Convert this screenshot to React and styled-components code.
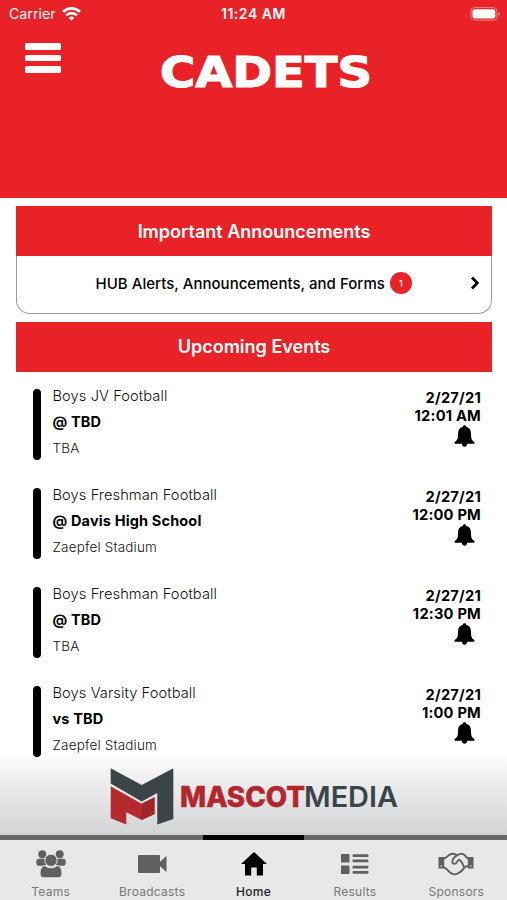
import React from 'react';
import styled, { createGlobalStyle } from 'styled-components';

const GlobalStyle = createGlobalStyle`
  * {
    box-sizing: border-box;
  }

  body {
    margin: 0;
    background: #fff;
    font-family: Inter, 'Liberation Sans', sans-serif;
  }

  svg {
    display: block;
  }
`;

const Screen = styled.div`
  display: flex;
  flex-direction: column;
  width: 507px;
  height: 900px;
  overflow: hidden;
`;

const Header = styled.header`
  flex: none;
  height: 198px;
  background: #e92227;
  color: #fff;
`;

const StatusBar = styled.div`
  display: grid;
  grid-template-columns: 1fr auto 1fr;
  align-items: center;
  height: 28px;
  padding: 0 6px;
  font-size: 14.2px;
  line-height: 18px;
`;

const Carrier = styled.div`
  display: flex;
  align-items: center;
  gap: 6px;
  padding-left: 3px;
`;

const Clock = styled.div`
  font-weight: 600;
  font-size: 14px;
  letter-spacing: 0.55px;
`;

const Battery = styled.div`
  display: flex;
  justify-content: flex-end;
`;

const TitleRow = styled.div`
  display: flex;
  align-items: flex-start;
  padding: 15px 0 0 25px;
`;

const MenuButton = styled.button`
  display: flex;
  flex-direction: column;
  gap: 5px;
  width: 36px;
  padding: 0;
  border: none;
  background: none;
  cursor: pointer;
`;

const MenuLine = styled.span`
  height: 6.6px;
  border-radius: 1.5px;
  background: #fff;
`;

const TeamLogo = styled.svg`
  margin-left: 97px;
`;

const Content = styled.main`
  flex: 1;
  min-height: 0;
  overflow: hidden;
  padding: 8px 15px 0 16px;
`;

const SectionTitle = styled.h2`
  display: flex;
  align-items: center;
  justify-content: center;
  height: 50px;
  margin: 0;
  background: #e92227;
  color: #fff;
  font-size: 18px;
  font-weight: 600;
`;

const Announcement = styled.div`
  display: flex;
  align-items: center;
  height: 57.5px;
  margin-bottom: 8px;
  padding: 0 12px 2px 78.5px;
  border: 1px solid #999;
  border-top: none;
  border-radius: 0 0 14px 14px;
  font-size: 15px;
  font-weight: 500;
  letter-spacing: 0.03px;
`;

const Count = styled.span`
  display: flex;
  align-items: center;
  justify-content: center;
  width: 22px;
  height: 22px;
  margin-left: 5px;
  border-radius: 50%;
  background: #e92227;
  color: #fff;
  font-size: 9px;
`;

const Chevron = styled.svg`
  margin-left: auto;
`;

const EventList = styled.div`
  display: flex;
  flex-direction: column;
  gap: 28px;
  padding: 17px 11px 0 17px;
`;

const EventRow = styled.div`
  display: flex;
  height: 71px;
`;

const EventMark = styled.div`
  width: 7.5px;
  margin-right: 12px;
  border-radius: 4px;
  background: #000;
`;

const EventInfo = styled.div`
  flex: 1;
  margin-top: -6px;
  line-height: 26px;
  white-space: nowrap;
`;

const Sport = styled.div`
  color: #111;
  font-size: 14.7px;
  font-weight: 300;
  letter-spacing: 0.06px;
`;

const Opponent = styled.div`
  font-size: 14.5px;
  font-weight: 700;
  letter-spacing: 0.15px;
`;

const Venue = styled.div`
  color: #111;
  font-size: 13.5px;
  font-weight: 300;
  letter-spacing: 0.17px;
`;

const EventTime = styled.div`
  display: flex;
  flex-direction: column;
  align-items: flex-end;
  font-size: 14.7px;
  font-weight: 700;
  line-height: 18px;
  letter-spacing: 0.2px;
`;

const Bell = styled.svg`
  margin-right: 6px;
`;

const SponsorBanner = styled.div`
  flex: none;
  height: 78px;
  padding: 9px 0 0 109px;
  background: linear-gradient(#fcfcfc, #eeeeef 30%, #d1d3d5);
`;

const TabBar = styled.nav`
  display: flex;
  flex: none;
  height: 65px;
  background: #e8e8e8;
`;

const Tab = styled.button`
  display: flex;
  flex: 1;
  flex-direction: column;
  align-items: center;
  padding: 8px 0 0;
  border: none;
  border-top: 5px solid ${(props) => (props.$active ? '#000' : '#686868')};
  border-radius: 0;
  background: none;
  color: ${(props) => (props.$active ? '#000' : '#606060')};
  font-family: inherit;
  font-size: 12px;
  font-weight: ${(props) => (props.$active ? 500 : 400)};
  line-height: 16px;
  letter-spacing: 0.25px;
  cursor: pointer;
`;

const TabIcon = styled.div`
  display: flex;
  align-items: center;
  justify-content: center;
  height: 31px;
  margin-bottom: 5px;
`;

const TabLabel = styled.span`
  color: ${(props) => (props.$active ? '#222' : '#777')};
`;

const events = [
  { sport: 'Boys JV Football', opponent: '@ TBD', venue: 'TBA', date: '2/27/21', time: '12:01 AM' },
  {
    sport: 'Boys Freshman Football',
    opponent: '@ Davis High School',
    venue: 'Zaepfel Stadium',
    date: '2/27/21',
    time: '12:00 PM',
  },
  { sport: 'Boys Freshman Football', opponent: '@ TBD', venue: 'TBA', date: '2/27/21', time: '12:30 PM' },
  { sport: 'Boys Varsity Football', opponent: 'vs TBD', venue: 'Zaepfel Stadium', date: '2/27/21', time: '1:00 PM' },
];

function WifiIcon() {
  return (
    <svg width="19" height="14" viewBox="0 0 19 14" fill="none" stroke="currentColor" strokeWidth="2.7">
      <path d="M1 4.8C5.9.1 13.1.1 18 4.8" />
      <path d="M4.1 8.2c3.1-2.9 7.7-2.9 10.8 0" />
      <path d="M6.6 10.7c1.7-1.6 4.1-1.6 5.8 0L9.5 13.7z" fill="currentColor" stroke="none" />
    </svg>
  );
}

function BatteryIcon() {
  return (
    <svg width="31" height="14" viewBox="0 0 31 14">
      <rect x=".9" y=".6" width="26" height="12.6" rx="3.6" fill="none" stroke="#fff" strokeOpacity=".45" />
      <rect x="2.5" y="2.2" width="22.8" height="9.4" rx="2" fill="#fff" />
      <path d="M28.6 5v4c1.8-.6 1.8-3.4 0-4z" fill="#fff" fillOpacity=".55" />
    </svg>
  );
}

function BellIcon() {
  return (
    <Bell width="21" height="22" viewBox="0 0 21 22">
      <path d="M10.5.3c-1 0-1.600.600-1.700 1.500C5.500 2.600 4.200 5 4.100 8l-.3 4.500c-.2 2-1.200 3-3 4.600-.8.800-.5 1.600.5 1.600h18.400c1 0 1.300-.8.500-1.600-1.800-1.600-2.800-2.600-3-4.600L16.900 8c-.1-3-1.400-5.400-4.700-6.200-.1-.9-.7-1.500-1.700-1.500zM7.700 18.500c.3 2.100 1.500 3.200 2.800 3.200s2.500-1.100 2.800-3.200z" />
    </Bell>
  );
}

function TeamsIcon() {
  return (
    <svg width="30" height="28" viewBox="0 0 30 28" fill="currentColor">
      <circle cx="6.300" cy="4.300" r="4" />
      <circle cx="23.700" cy="4.300" r="4" />
      <rect x=".3" y="8.700" width="10" height="7" rx="2.800" />
      <rect x="19.700" y="8.700" width="10" height="7" rx="2.800" />
      <path
        d="M9 15.500c3 3 9 3 12 0 3.600.5 5 4 5 8 0 2.800-1.500 4.300-4 4.300H8c-2.500 0-4-1.500-4-4.300 0-4 1.400-7.500 5-8z"
        stroke="#e8e8e8"
      />
      <circle cx="15" cy="10.300" r="6.200" stroke="#e8e8e8" />
    </svg>
  );
}

function BroadcastIcon() {
  return (
    <svg width="29" height="20" viewBox="0 0 29 20" fill="currentColor">
      <rect y="1" width="22" height="18" rx="1" />
      <path d="M21.500 8.200 28.500 2v16l-7-6.200z" />
    </svg>
  );
}

function HomeIcon() {
  return (
    <svg width="26" height="24" viewBox="0 0 26 24" fill="currentColor">
      <path d="M13 0 26 12h-4v11.600h-6.200v-8h-5.600v8H4V12H0z" />
    </svg>
  );
}

function ResultsIcon() {
  return (
    <svg width="28" height="20" viewBox="0 0 28 20" fill="currentColor">
      <rect width="8.500" height="8.500" rx=".5" />
      <rect y="11.500" width="8.500" height="8.500" rx=".5" />
      <rect x="11.500" y=".2" width="16" height="2.800" rx="1" />
      <rect x="11.500" y="5.500" width="16" height="2.800" rx="1" />
      <rect x="11.500" y="11.700" width="16" height="2.800" rx="1" />
      <rect x="11.500" y="17" width="16" height="2.800" rx="1" />
    </svg>
  );
}

function SponsorsIcon() {
  return (
    <svg width="36" height="24" viewBox="0 0 36 24" fill="none" stroke="currentColor" strokeWidth="1.900" strokeLinejoin="round" strokeLinecap="round">
      <path d="M.5 5h5.700v11.500H.5zM29.800 5h5.700v11.500h-5.700z" fill="currentColor" stroke="none" />
      <path d="M6 6.500c2.500-.3 4-3.500 7-4.500 2.300-.7 4.500.2 6.300 1.200C22 1.500 25 1.300 27 3.500c1 1.200 1.800 2.400 3 2.800" />
      <path d="M6 15.500c2.500.5 3.500 3 6 5 2.700 2 5.500 2.500 8 .8 3-1.800 5-3 6-5.300.7-1.500 2-1.800 4-2" />
      <path d="M19.300 3.200c-3 1.600-4.800 4-5 7 .3 2.300 3.400 2.200 4.500 0 .6-1.400 1.200-2.300 2.700-2.500 2 1.500 3.500 3.500 4.500 7.300" />
      <circle cx="3.200" cy="14" r=".8" fill="#e8e8e8" stroke="none" />
      <circle cx="32.800" cy="14" r=".8" fill="#e8e8e8" stroke="none" />
    </svg>
  );
}

function MascotLogo() {
  return (
    <svg width="292" height="60" viewBox="0 0 292 60">
      <path d="M1.700 2.300 32.700 19 64.300 2.300V53l-16 5.500V27L32.700 35.500l-31-18z" fill="#3b4548" />
      <path d="M1.700 20.300 32.700 37.700 45.500 31.300V48l-12.800 6-15.400-7.700V58.500L1.700 52.300z" fill="#b52a2e" />
      <path d="M32.700 37.700 45.500 31.300V48l-12.800 6z" fill="#a02529" />
      <g fontFamily="Inter, sans-serif" fontSize="28.500">
        <text x="71" y="41" fill="#b3272c" stroke="#b3272c" strokeWidth=".5" fontWeight="800" textLength="125" lengthAdjust="spacingAndGlyphs">
          MASCOT
        </text>
        <text x="195" y="41" fill="#3b4548" fontWeight="600" textLength="94" lengthAdjust="spacingAndGlyphs">
          MEDIA
        </text>
      </g>
    </svg>
  );
}

const tabs = [
  { label: 'Teams', icon: <TeamsIcon /> },
  { label: 'Broadcasts', icon: <BroadcastIcon /> },
  { label: 'Home', icon: <HomeIcon />, active: true },
  { label: 'Results', icon: <ResultsIcon /> },
  { label: 'Sponsors', icon: <SponsorsIcon /> },
];

function App() {
  return (
    <Screen>
      <GlobalStyle />
      <Header>
        <StatusBar>
          <Carrier>
            Carrier
            <WifiIcon />
          </Carrier>
          <Clock>11:24 AM</Clock>
          <Battery>
            <BatteryIcon />
          </Battery>
        </StatusBar>
        <TitleRow>
          <MenuButton aria-label="Menu">
            <MenuLine />
            <MenuLine />
            <MenuLine />
          </MenuButton>
          <TeamLogo width="220" height="60" viewBox="0 0 220 60">
            <text
              x="2"
              y="44"
              fill="#fff"
              stroke="#fff"
              strokeWidth="1.200"
              fontFamily="'DejaVu Sans', sans-serif"
              fontWeight="700"
              fontSize="42.500"
              textLength="212"
              lengthAdjust="spacingAndGlyphs"
            >
              CADETS
            </text>
          </TeamLogo>
        </TitleRow>
      </Header>
      <Content>
        <SectionTitle>Important Announcements</SectionTitle>
        <Announcement>
          HUB Alerts, Announcements, and Forms
          <Count>1</Count>
          <Chevron width="8" height="14" viewBox="0 0 8 14" fill="none" stroke="#000" strokeWidth="2.800">
            <path d="M1 1.500 6.300 7 1 12.500" />
          </Chevron>
        </Announcement>
        <SectionTitle>Upcoming Events</SectionTitle>
        <EventList>
          {events.map((event, index) => (
            <EventRow key={index}>
              <EventMark />
              <EventInfo>
                <Sport>{event.sport}</Sport>
                <Opponent>{event.opponent}</Opponent>
                <Venue>{event.venue}</Venue>
              </EventInfo>
              <EventTime>
                <span>{event.date}</span>
                <span>{event.time}</span>
                <BellIcon />
              </EventTime>
            </EventRow>
          ))}
        </EventList>
      </Content>
      <SponsorBanner>
        <MascotLogo />
      </SponsorBanner>
      <TabBar>
        {tabs.map((tab) => (
          <Tab key={tab.label} $active={tab.active}>
            <TabIcon>{tab.icon}</TabIcon>
            <TabLabel $active={tab.active}>{tab.label}</TabLabel>
          </Tab>
        ))}
      </TabBar>
    </Screen>
  );
}

export default App;
